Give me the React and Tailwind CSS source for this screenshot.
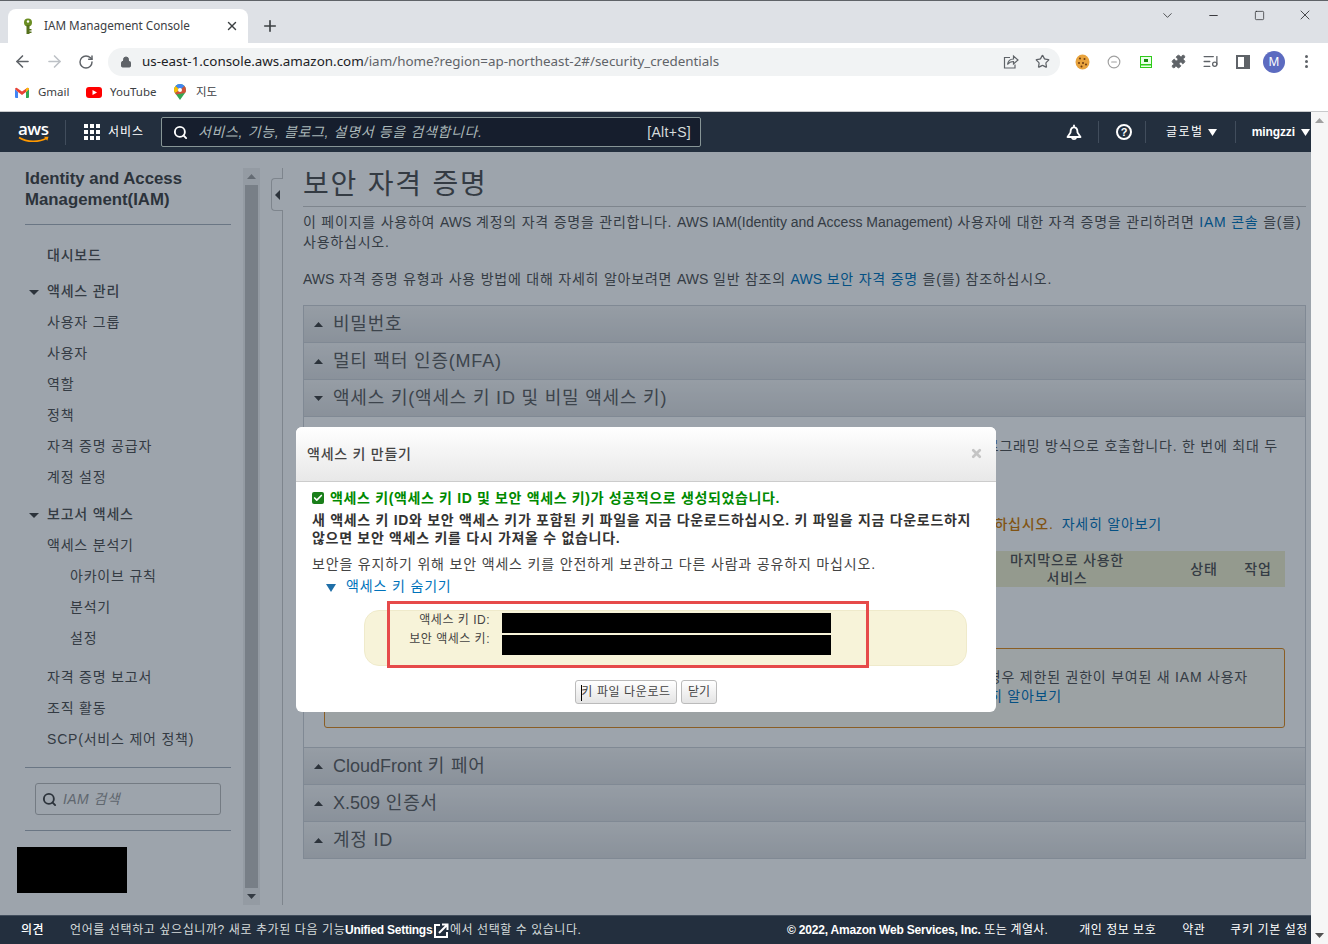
import {
  ArrowLeft,
  ArrowRight,
  RotateCw,
  Lock,
  Star,
  Puzzle,
  CircleMinus,
  ListMusic,
  Search,
  X,
  Plus,
  ChevronDown,
  Minus,
  Square,
  Check,
} from "lucide-react";

const sans = "font-['Liberation_Sans','Noto_Sans_CJK_KR',sans-serif]";

function Triangle({ dir = "down", className = "" }) {
  const points = {
    down: "0,0 10,0 5,5",
    up: "0,5 10,5 5,0",
    left: "5,0 5,10 0,5",
  };
  return (
    <svg
      className={className}
      viewBox={dir === "left" ? "0 0 5 10" : "0 0 10 5"}
      preserveAspectRatio="none"
      fill="currentColor"
    >
      <polygon points={points[dir]} />
    </svg>
  );
}

function ChromeBar() {
  return (
    <div className="shrink-0 font-['Noto_Sans','Noto_Sans_CJK_KR',sans-serif]">
      {/* tab strip */}
      <div className="h-[43px] bg-[#dee1e6] border-t border-[#5f6368] flex items-end pl-[8px] relative">
        <div className="w-[240px] h-[34px] bg-white rounded-t-[8px] flex items-center pl-[14px] pr-[9px]">
          <svg className="w-[12px] h-[17px] mr-[10px]" viewBox="0 0 12 17">
            <circle cx="6" cy="4.5" r="4" fill="#6b8e23" />
            <circle cx="6" cy="3.5" r="1.2" fill="#fff" />
            <rect x="4.5" y="7" width="3" height="9" fill="#55701c" />
            <rect x="7" y="11" width="2.5" height="1.5" fill="#55701c" />
            <rect x="7" y="13.5" width="2.5" height="1.5" fill="#55701c" />
          </svg>
          <span className="text-[11.7px] text-[#3c4043] flex-1 whitespace-nowrap">IAM Management Console</span>
          <X className="w-[14px] h-[14px] text-[#3c4043]" strokeWidth={2.4} />
        </div>
        <div className="h-[34px] flex items-center ml-[13px]">
          <Plus className="w-[18px] h-[18px] text-[#3c4043]" strokeWidth={2.2} />
        </div>
        <div className="ml-auto h-[28px] flex items-center self-start text-[#202124]">
          <div className="w-[46px] flex justify-center">
            <ChevronDown className="w-[15px] h-[15px]" strokeWidth={1.2} />
          </div>
          <div className="w-[46px] flex justify-center">
            <Minus className="w-[13px] h-[13px]" strokeWidth={1.6} />
          </div>
          <div className="w-[46px] flex justify-center">
            <Square className="w-[11px] h-[11px]" strokeWidth={1.5} absoluteStrokeWidth />
          </div>
          <div className="w-[46px] flex justify-center">
            <X className="w-[16px] h-[16px]" strokeWidth={1.2} />
          </div>
        </div>
      </div>
      {/* toolbar */}
      <div className="h-[37px] bg-white flex items-center pl-[13px] text-[#5f6368]">
        <ArrowLeft className="w-[19px] h-[19px] mr-[13px]" strokeWidth={2} />
        <ArrowRight className="w-[19px] h-[19px] mr-[14px] text-[#bdc1c6]" strokeWidth={2} />
        <RotateCw className="w-[16px] h-[16px] mr-[14px]" strokeWidth={2.2} />
        <div className="w-[952px] h-[28px] bg-[#f1f3f4] rounded-full flex items-center pl-[12px] pr-[10px]">
          <Lock className="w-[12px] h-[12px] mr-[10px] fill-[#5f6368]" strokeWidth={2} />
          <span className="text-[13.4px] text-[#202124] whitespace-nowrap">us-east-1.console.aws.amazon.com</span>
          <span className="text-[13.4px] text-[#5f6368] whitespace-nowrap">/iam/home?region=ap-northeast-2#/security_credentials</span>
          <svg className="w-[16px] h-[15px] ml-auto mr-[16px]" viewBox="0 0 16 15" fill="none" stroke="#5f6368" strokeWidth="1.200">
            <path d="M7 3.500H1.500v10.500H12V10.500" />
            <path d="M4.500 10.500C5 7 7.500 5 10.500 5V2l4.500 4-4.500 4V7.500C8 7.500 6 8.500 4.500 10.500z" />
          </svg>
          <Star className="w-[15px] h-[15px]" strokeWidth={2} />
        </div>
        <div className="flex items-center">
          <svg className="w-[15px] h-[16px] ml-[15px]" viewBox="0 0 15 16">
            <ellipse cx="7.500" cy="8" rx="7" ry="7.500" fill="#e8a33d" />
            <circle cx="5" cy="4.500" r="1" fill="#6b3a10" />
            <circle cx="9.500" cy="5" r="1" fill="#6b3a10" />
            <circle cx="4" cy="9" r="1" fill="#6b3a10" />
            <circle cx="8" cy="9" r="1" fill="#6b3a10" />
            <circle cx="11" cy="10.500" r="1" fill="#6b3a10" />
            <circle cx="6.500" cy="12.500" r="1" fill="#6b3a10" />
          </svg>
          <CircleMinus className="w-[14px] h-[14px] ml-[17px] text-[#a0a0a0]" strokeWidth={2} />
          <svg className="w-[12px] h-[12px] ml-[19px]" viewBox="0 0 12 12">
            <rect x="0.500" y="0.500" width="11" height="11" fill="#eaffea" stroke="#2ecc1a" />
            <rect x="4" y="3" width="4" height="3" fill="#1a8a10" />
            <rect x="1" y="8" width="10" height="1.500" fill="#2ecc1a" />
          </svg>
          <Puzzle className="w-[15px] h-[15px] ml-[19px] fill-[#5f6368]" strokeWidth={1.5} />
          <ListMusic className="w-[17px] h-[17px] ml-[16px]" strokeWidth={1.8} />
          <svg className="w-[14px] h-[14px] ml-[17px]" viewBox="0 0 14 14">
            <rect x="0" y="0" width="14" height="14" fill="#5f6368" />
            <rect x="2" y="2" width="6" height="10" fill="#fff" />
          </svg>
          <div className="w-[22px] h-[22px] ml-[13px] rounded-full bg-[#5c6bc0] text-white text-[12px] flex items-center justify-center">M</div>
          <div className="flex flex-col gap-[2px] ml-[20px]">
            <span className="w-[3px] h-[3px] rounded-full bg-[#5f6368]" />
            <span className="w-[3px] h-[3px] rounded-full bg-[#5f6368]" />
            <span className="w-[3px] h-[3px] rounded-full bg-[#5f6368]" />
          </div>
        </div>
      </div>
      {/* bookmarks */}
      <div className="h-[32px] bg-white border-b border-[#c8cacc] flex items-center pl-[15px] pb-[7px] text-[11.5px] text-[#3c4043]">
        <svg className="w-[14px] h-[11px] mr-[9px]" viewBox="0 0 14 11">
          <path d="M0 2v8a1 1 0 0 0 1 1h2V5z" fill="#4285f4" />
          <path d="M14 2v8a1 1 0 0 1-1 1h-2V5z" fill="#34a853" />
          <path d="M0 2l3 3 4 3 4-3 3-3a1.3 1.3 0 0 0-2-1L7 4.5 2 1a1.3 1.3 0 0 0-2 1z" fill="#ea4335" />
          <path d="M11 5l3-3a1.3 1.3 0 0 0-2-1l-1 .8z" fill="#fbbc04" />
        </svg>
        <span className="w-[32px]">Gmail</span>
        <svg className="w-[16px] h-[11px] ml-[16px] mr-[8px]" viewBox="0 0 16 11">
          <rect width="16" height="11" rx="3" fill="#f00" />
          <polygon points="6.5,3 11,5.5 6.5,8" fill="#fff" />
        </svg>
        <span className="w-[46px]">YouTube</span>
        <svg className="w-[12px] h-[16px] ml-[18px] mr-[10px]" viewBox="0 0 12 16">
          <path d="M6 0a6 6 0 0 0-6 6c0 1.2.4 2.2 1 3l5 7 5-7c.6-.8 1-1.8 1-3a6 6 0 0 0-6-6z" fill="#34a853" />
          <path d="M6 0a6 6 0 0 0-4.5 2L6 6l4.500-4A6 6 0 0 0 6 0z" fill="#4285f4" />
          <path d="M1.5 2A6 6 0 0 0 0 6c0 1.2.4 2.2 1 3l5-3z" fill="#fbbc04" />
          <path d="M10.500 2L6 6l-5 3 1 1.500L11 9c.6-.8 1-1.800 1-3a6 6 0 0 0-1.500-4z" fill="#ea4335" opacity="0.85" />
          <circle cx="6" cy="6" r="2" fill="#fff" />
        </svg>
        <span>지도</span>
      </div>
    </div>
  );
}

function NavBar() {
  return (
    <div className={`h-[40px] shrink-0 bg-[#232f3e] flex items-center text-white relative z-20 ${sans}`}>
      <div className="w-[65px] pl-[18px] flex flex-col items-start">
        <span className="text-[17px] leading-[15px] font-semibold tracking-[-0.5px] font-['Open_Sans',sans-serif]">aws</span>
        <svg className="w-[32px] h-[7px]" viewBox="0 0 32 7" fill="none">
          <path d="M1 1.500C9 6.500 21 6.500 29 2" stroke="#ff9900" strokeWidth="1.600" />
          <path d="M26 .8h4.500l-1.200 4z" fill="#ff9900" />
        </svg>
      </div>
      <div className="w-px h-[25px] bg-[#414d5c]" />
      <div className="grid grid-cols-3 gap-[2px] ml-[18px] w-[16px]">
        {Array.from({ length: 9 }).map((_, i) => (
          <span key={i} className="w-[4px] h-[4px] bg-white" />
        ))}
      </div>
      <span className="ml-[8px] text-[12px] tracking-[1px] w-[36px] whitespace-nowrap">서비스</span>
      <div className="ml-[17px] w-[540px] h-[30px] bg-[#161e2d] border border-[#879596] rounded-[2px] flex items-center pl-[11px] pr-[9px]">
        <Search className="w-[15px] h-[15px]" strokeWidth={3} />
        <span className="ml-[10px] text-[14px] italic text-[#aab7b8] tracking-[0.66px] whitespace-nowrap">서비스, 기능, 블로그, 설명서 등을 검색합니다.</span>
        <span className="ml-auto text-[14px] text-[#d5dbdb] tracking-[0.3px]">[Alt+S]</span>
      </div>
      <svg className="w-[16px] h-[17px] ml-[365px]" viewBox="0 0 16 17" fill="none" stroke="#fff" strokeWidth="1.800" strokeLinejoin="round">
        <path d="M8 .8V3C5.500 3.400 4.500 5.500 4.500 8.500L1.500 13h13l-3-4.500C11.500 5.500 10.500 3.400 8 3" />
        <path d="M5.800 13.500a2.300 2.300 0 0 0 4.400 0" />
      </svg>
      <div className="w-px h-[22px] bg-[#414d5c] ml-[16px]" />
      <div className="w-[16px] h-[16px] ml-[17px] rounded-full border-2 border-white flex items-center justify-center text-[11px] font-bold leading-none">?</div>
      <div className="w-px h-[22px] bg-[#414d5c] ml-[13px]" />
      <span className="ml-[20px] text-[12px] tracking-[1.5px] whitespace-nowrap">글로벌</span>
      <Triangle className="w-[9px] h-[7px] ml-[4px]" />
      <div className="w-px h-[22px] bg-[#414d5c] ml-[18px]" />
      <span className="ml-[16px] text-[12px] font-bold tracking-[-0.1px]">mingzzi</span>
      <Triangle className="w-[9px] h-[7px] ml-[6px]" />
    </div>
  );
}

const navItems = [
  { label: "대시보드", mt: "mt-[15px]", bold: true },
  { label: "액세스 관리", mt: "mt-[5px]", arrow: true, bold: true },
  { label: "사용자 그룹" },
  { label: "사용자" },
  { label: "역할" },
  { label: "정책" },
  { label: "자격 증명 공급자" },
  { label: "계정 설정" },
  { label: "보고서 액세스", mt: "mt-[6px]", arrow: true, bold: true },
  { label: "액세스 분석기" },
  { label: "아카이브 규칙", sub: true },
  { label: "분석기", sub: true },
  { label: "설정", sub: true },
  { label: "자격 증명 보고서", mt: "mt-[8px]" },
  { label: "조직 활동" },
  { label: "SCP(서비스 제어 정책)" },
];

function Sidebar() {
  return (
    <div className="w-[243px] shrink-0 pl-[25px] pr-[12px] pt-[16px]">
      <h2 className="text-[16.8px] leading-[21px] font-bold text-[#444]">
        Identity and Access
        <br />
        Management(IAM)
      </h2>
      <div className="border-b border-[#aab2bc] mt-[14px]" />
      <ul>
        {navItems.map((item) => (
          <li
            key={item.label}
            className={`h-[31px] flex items-center text-[14px] text-[#505050] whitespace-nowrap tracking-[0.8px] relative ${item.sub ? "pl-[45px]" : "pl-[22px]"} ${item.mt || ""} ${item.bold ? "font-medium" : ""}`}
          >
            {item.arrow && <Triangle className="w-[10px] h-[5px] text-[#444] absolute left-[4px] top-[14px]" />}
            {item.label}
          </li>
        ))}
      </ul>
      <div className="border-b border-[#aab2bc] mt-[12px]" />
      <div className="mt-[15px] mx-[10px] h-[32px] border border-[#bbb] rounded-[3px] flex items-center pl-[6px]">
        <Search className="w-[15px] h-[15px] text-[#444]" strokeWidth={3} />
        <span className="ml-[6px] text-[14px] italic text-[#999] tracking-[0.4px]">IAM 검색</span>
      </div>
      <div className="border-b border-[#aab2bc] mt-[15px]" />
    </div>
  );
}

function Scrollbar({ thumb = true, className = "", bg = "bg-[#f1f1f1]" }) {
  return (
    <div className={`w-[17px] flex flex-col items-center ${bg} ${className}`}>
      <div className="h-[17px] flex items-center justify-center">
        <Triangle dir="up" className="w-[9px] h-[5px] text-[#a0a0a0]" />
      </div>
      <div className="flex-1 w-[13px]">
        {thumb && <div className="h-full bg-[#c1c1c1]" />}
      </div>
      <div className="h-[17px] flex items-center justify-center">
        <Triangle dir="down" className="w-[9px] h-[5px] text-[#505050]" />
      </div>
    </div>
  );
}

function AccordionHead({ latin, label, open }) {
  return (
    <div className="h-[37px] flex items-center bg-gradient-to-b from-[#f4f4f4] to-[#dfe0e2] border-b border-[#cfd3d7] pl-[10px]">
      <Triangle dir={open ? "down" : "up"} className="w-[9px] h-[5px] text-[#444] mr-[10px]" />
      <span className="text-[18px] text-[#5f5f5f] whitespace-pre">
        {latin}
        <span className="tracking-[0.8px]">{label}</span>
      </span>
    </div>
  );
}

function MainContent() {
  return (
    <div className="w-[1003px] shrink-0 pt-[16px]">
      <h1 className="text-[28px] leading-[34px] text-[#505050] tracking-[1.8px] border-b border-[#ccc] pb-[4px]">보안 자격 증명</h1>
      <p className="text-[14px] leading-[20px] text-[#525252] mt-[5px] tracking-[0.78px]">
        이 페이지를 사용하여 <span className="tracking-normal">AWS</span> 계정의 자격 증명을 관리합니다. <span className="tracking-normal">AWS IAM(Identity and Access Management)</span> 사용자에 대한 자격 증명을 관리하려면 <span className="text-[#0073bb]">IAM 콘솔</span> 을(를) 사용하십시오.
      </p>
      <p className="text-[14px] leading-[20px] text-[#525252] mt-[17px] tracking-[0.78px]">
        <span className="tracking-normal">AWS</span> 자격 증명 유형과 사용 방법에 대해 자세히 알아보려면 <span className="tracking-normal">AWS</span> 일반 참조의 <span className="text-[#0073bb]"><span className="tracking-normal">AWS</span> 보안 자격 증명</span> 을(를) 참조하십시오.
      </p>
      <div className="mt-[16px] border-t border-x border-[#cfd3d7]">
        <AccordionHead label="비밀번호" />
        <AccordionHead label="멀티 팩터 인증(MFA)" />
        <AccordionHead label="액세스 키(액세스 키 ID 및 비밀 액세스 키)" open />
        <div className="h-[331px] border-b border-[#cfd3d7] bg-white px-[20px] pt-[19px] flex flex-col text-[#525252] tracking-[0.78px]">
          <div className="h-[20px] overflow-hidden flex justify-end pr-[7px] text-[14px] leading-[20px] whitespace-nowrap">
            프로그래밍 방식으로 호출합니다. 한 번에 최대 두
          </div>
          <div className="h-[20px] mt-[58px] overflow-hidden flex justify-end pr-[123px] text-[14px] leading-[20px] whitespace-nowrap">
            <span className="text-[#d17a00] font-medium">다운로드하십시오.</span>
            <span className="text-[#0073bb] ml-[8px]">자세히 알아보기</span>
          </div>
          <div className="h-[36px] mt-[17px] bg-[#f0eecd] flex items-center text-[14px] leading-[18px] font-medium">
            <div className="w-[180px] ml-auto mr-[20px] text-center">
              마지막으로 사용한
              <br />
              서비스
            </div>
            <div className="w-[54px] text-center">상태</div>
            <div className="w-[54px] text-center">작업</div>
          </div>
          <div className="h-[80px] mt-[61px] border border-[#e08a1e] rounded-[3px] bg-[#fdfcf2] text-[14px] leading-[19px] whitespace-nowrap pt-[19px] overflow-hidden">
            <div className="flex justify-end pr-[36px]">경우 제한된 권한이 부여된 새 IAM 사용자</div>
            <div className="flex justify-end pr-[222px] text-[#0073bb]">자세히 알아보기</div>
          </div>
        </div>
        <AccordionHead latin="CloudFront" label=" 키 페어" />
        <AccordionHead latin="X.509" label=" 인증서" />
        <AccordionHead label="계정 ID" />
      </div>
    </div>
  );
}

function KeyModal() {
  return (
    <div className={`absolute left-[296px] top-[275px] w-[700px] h-[285px] bg-white rounded-[6px] z-10 overflow-hidden ${sans}`}>
      <div className="h-[55px] bg-gradient-to-b from-white to-[#e8e8e8] border-b border-[#ccc] flex items-center pl-[11px] pr-[13px]">
        <span className="text-[14px] font-medium text-[#444] tracking-[0.75px]">액세스 키 만들기</span>
        <X className="w-[13px] h-[13px] ml-auto mt-[-2px] text-[#c4c4c4]" strokeWidth={5} />
      </div>
      <div className="pl-[16px] pr-[16px] pt-[7px]">
        <div className="flex items-center h-[18px] text-[14px] font-bold text-[#008a00] tracking-[0.65px] whitespace-nowrap">
          <span className="w-[12px] h-[12px] mr-[6px] bg-[#1a7f1a] rounded-[2px] flex items-center justify-center">
            <Check className="w-[10px] h-[10px] text-white" strokeWidth={4} />
          </span>
          액세스 키(액세스 키 ID 및 보안 액세스 키)가 성공적으로 생성되었습니다.
        </div>
        <p className="mt-[4px] text-[14px] leading-[18px] font-bold text-[#333] tracking-[0.7px]">
          새 액세스 키 ID와 보안 액세스 키가 포함된 키 파일을 지금 다운로드하십시오. 키 파일을 지금 다운로드하지 않으면 보안 액세스 키를 다시 가져올 수 없습니다.
        </p>
        <p className="mt-[8px] text-[14px] leading-[18px] text-[#444] tracking-[0.83px] whitespace-nowrap">
          보안을 유지하기 위해 보안 액세스 키를 안전하게 보관하고 다른 사람과 공유하지 마십시오.
        </p>
        <div className="mt-[4px] h-[18px] pl-[14px] flex items-center text-[14px] text-[#0073bb] tracking-[0.85px]">
          <Triangle className="w-[10px] h-[8px] text-[#1f6fa8] mr-[10px] mt-[3px]" />
          액세스 키 숨기기
        </div>
        <div className="relative mt-[15px] ml-[52px] w-[603px] h-[56px] bg-[#f7f3d9] border border-[#efeacb] rounded-[15px] flex">
          <div className="w-[125px] text-right text-[12px] leading-[19px] text-[#444] tracking-[0.5px]">
            <div>액세스 키 ID:</div>
            <div>보안 액세스 키:</div>
          </div>
          <div className="ml-[12px] pt-[2px] flex flex-col gap-[2px]">
            <div className="w-[329px] h-[20px] bg-black" />
            <div className="w-[329px] h-[20px] bg-black" />
          </div>
          {/* red highlight box */}
          <div className="absolute left-[22px] top-[-10px] w-[482px] h-[67px] border-[3px] border-[#e64a4a]" />
        </div>
        <div className="mt-[14px] flex justify-center gap-[4px]">
          <div className="relative h-[24px] w-[102px] border border-[#bbb] rounded-[3px] bg-gradient-to-b from-white to-[#e4e4e4] text-[12px] leading-[22px] text-[#444] text-center tracking-[0.6px]">
            키 파일 다운로드
            <span className="absolute left-[5px] top-[4px] w-px h-[16px] bg-black" />
          </div>
          <div className="h-[24px] w-[36px] border border-[#bbb] rounded-[3px] bg-gradient-to-b from-white to-[#e4e4e4] text-[12px] leading-[22px] text-[#444] text-center">
            닫기
          </div>
        </div>
      </div>
    </div>
  );
}

function Footer() {
  return (
    <div className={`h-[29px] shrink-0 bg-[#232f3e] border-t border-[#414d5c] flex items-center text-[12px] text-[#d5dbdb] whitespace-nowrap relative z-20 ${sans}`}>
      <span className="ml-[21px] w-[49px] text-white font-medium tracking-[0.5px]">의견</span>
      <span className="w-[275px] tracking-[0.6px]">언어를 선택하고 싶으십니까? 새로 추가된 다음 기능</span>
      <span className="w-[89px] text-white font-bold tracking-[-0.25px]">Unified Settings</span>
      <svg className="w-[15px] h-[15px] mr-[1px]" viewBox="0 0 15 15" fill="none" stroke="#fff">
        <path d="M6 2H1v12h12V9" strokeWidth="2" />
        <path d="M5 10l8-8M8 1.500h5.500V7" strokeWidth="2" />
      </svg>
      <span className="tracking-[0.55px]">에서 선택할 수 있습니다.</span>
      <span className="ml-auto text-white font-bold tracking-[-0.2px]">© 2022, Amazon Web Services, Inc.</span>
      <span className="text-white tracking-[0.3px] whitespace-pre"> 또는 계열사.</span>
      <span className="ml-[31px] tracking-[0.5px] text-white">개인 정보 보호</span>
      <span className="ml-[26px] tracking-[0.5px] text-white">약관</span>
      <span className="ml-[25px] mr-[3px] tracking-[0.6px] text-white">쿠키 기본 설정</span>
    </div>
  );
}

export default function App() {
  return (
    <div className={`w-[1328px] h-[944px] overflow-hidden flex flex-col bg-white ${sans}`}>
      <ChromeBar />
      <div className="flex-1 flex min-h-0">
        <div className="w-[1311px] flex flex-col">
          <NavBar />
          <div className="flex-1 relative flex bg-white min-h-0">
            <Sidebar />
            <Scrollbar className="mt-[16px] mb-[10px]" />
            <div className="w-[23px] shrink-0 mt-[16px] mb-[10px] border-r border-[#ccc] relative">
              <div className="absolute left-[11px] top-[10px] w-[12px] h-[33px] bg-white border border-r-0 border-[#ccc] rounded-l-[4px] flex items-center justify-center">
                <Triangle dir="left" className="w-[5px] h-[10px] text-[#444]" />
              </div>
            </div>
            <div className="w-[20px] shrink-0" />
            <MainContent />
            {/* dim layer behind the dialog */}
            <div className="absolute inset-0 bg-[#0a1b30]/40" />
            <div className="absolute left-[17px] top-[695px] w-[110px] h-[46px] bg-black" />
            <KeyModal />
          </div>
          <Footer />
        </div>
        <Scrollbar thumb={false} bg="bg-[#f6f6f6]" />
      </div>
    </div>
  );
}
